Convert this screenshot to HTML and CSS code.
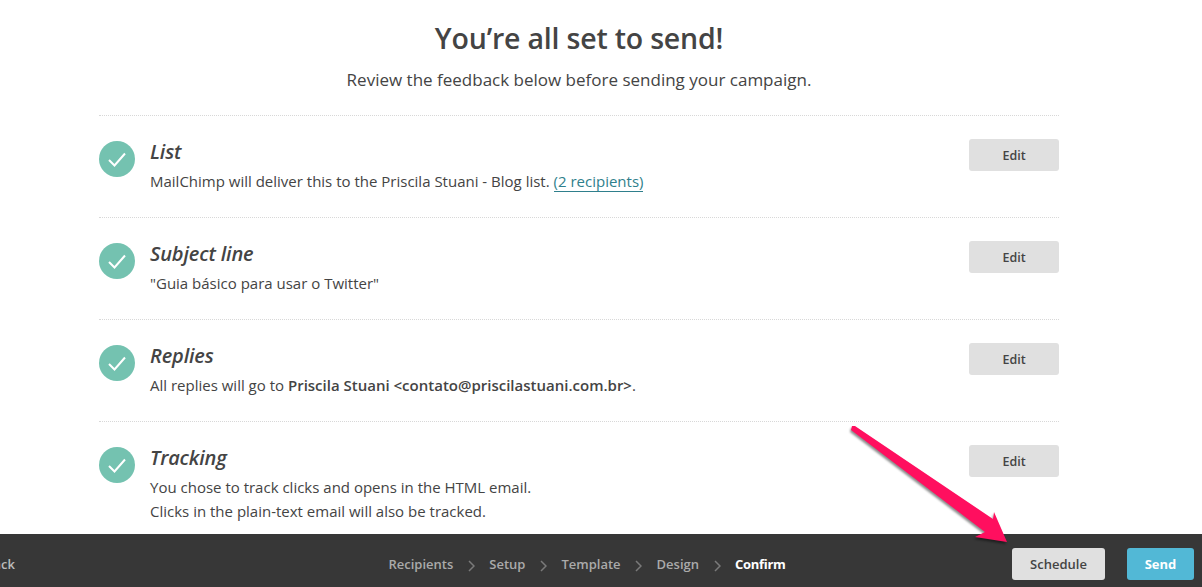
FILE: index.html
```html
<!DOCTYPE html>
<html lang="en">
<head>
<meta charset="utf-8">
<title>Confirm</title>
<link rel="stylesheet" href="styles.css">
</head>
<body>
<main class="page">
  <h1 class="title">You’re all set to send!</h1>
  <p class="lead">Review the feedback below before sending your campaign.</p>
  <ul class="checks">
    <li class="check">
      <svg class="tick" viewBox="0 0 36 36"><circle cx="18" cy="18" r="18" fill="#74c2b0"/><path d="M10 19l5.500 5.500L26 12.500" fill="none" stroke="#fff" stroke-width="2"/></svg>
      <div class="body">
        <h2 class="name">List</h2>
        <p class="desc">MailChimp will deliver this to the Priscila Stuani - Blog list. <a class="link" href="#">(2 recipients)</a></p>
      </div>
      <button class="edit">Edit</button>
    </li>
    <li class="check">
      <svg class="tick" viewBox="0 0 36 36"><circle cx="18" cy="18" r="18" fill="#74c2b0"/><path d="M10 19l5.500 5.500L26 12.500" fill="none" stroke="#fff" stroke-width="2"/></svg>
      <div class="body">
        <h2 class="name">Subject line</h2>
        <p class="desc">"Guia básico para usar o Twitter"</p>
      </div>
      <button class="edit">Edit</button>
    </li>
    <li class="check">
      <svg class="tick" viewBox="0 0 36 36"><circle cx="18" cy="18" r="18" fill="#74c2b0"/><path d="M10 19l5.500 5.500L26 12.500" fill="none" stroke="#fff" stroke-width="2"/></svg>
      <div class="body">
        <h2 class="name">Replies</h2>
        <p class="desc">All replies will go to <strong>Priscila Stuani &lt;contato@priscilastuani.com.br&gt;</strong>.</p>
      </div>
      <button class="edit">Edit</button>
    </li>
    <li class="check">
      <svg class="tick" viewBox="0 0 36 36"><circle cx="18" cy="18" r="18" fill="#74c2b0"/><path d="M10 19l5.500 5.500L26 12.500" fill="none" stroke="#fff" stroke-width="2"/></svg>
      <div class="body">
        <h2 class="name">Tracking</h2>
        <p class="desc">You chose to track clicks and opens in the HTML email.<br>Clicks in the plain-text email will also be tracked.</p>
      </div>
      <button class="edit">Edit</button>
    </li>
  </ul>
</main>
<footer class="bar">
  <a class="back" href="#">Back</a>
  <nav class="steps">
    <span class="step">Recipients</span>
    <svg class="sep" viewBox="0 0 7 12"><path d="M1 1l5 5-5 5" fill="none" stroke="#7a7a7a" stroke-width="1.500"/></svg>
    <span class="step">Setup</span>
    <svg class="sep" viewBox="0 0 7 12"><path d="M1 1l5 5-5 5" fill="none" stroke="#7a7a7a" stroke-width="1.500"/></svg>
    <span class="step">Template</span>
    <svg class="sep" viewBox="0 0 7 12"><path d="M1 1l5 5-5 5" fill="none" stroke="#7a7a7a" stroke-width="1.500"/></svg>
    <span class="step">Design</span>
    <svg class="sep" viewBox="0 0 7 12"><path d="M1 1l5 5-5 5" fill="none" stroke="#7a7a7a" stroke-width="1.500"/></svg>
    <span class="step current">Confirm</span>
  </nav>
  <div class="actions">
    <button class="btn schedule">Schedule</button>
    <button class="btn send">Send</button>
  </div>
</footer>
<svg class="arrow" viewBox="0 0 1202 587"><polygon points="852,426 855,426 993,519 994,512 1007,542 975,537 985,532 851,430" fill="#ff0f5f"/></svg>
</body>
</html>
```
FILE: styles.css
```css
* { box-sizing: border-box; }
html, body { margin: 0; height: 100%; overflow: hidden; }
body {
  position: relative;
  background: #fff;
  color: #444;
  font-family: "Open Sans", sans-serif;
  display: flex;
  flex-direction: column;
}
.page {
  flex: 1;
  min-height: 0;
  overflow: hidden;
  width: 960px;
  margin-left: 99px;
  padding-top: 17px;
}
.title {
  margin: 0;
  height: 43px;
  font-size: 28.500px;
  line-height: 43px;
  font-weight: 600;
  text-align: center;
  letter-spacing: -0.2px;
}
.lead {
  margin: 0;
  padding-top: 9px;
  height: 55px;
  font-size: 17px;
  line-height: 22px;
  text-align: center;
}
.checks { list-style: none; margin: 0; padding: 0; }
.check {
  display: flex;
  align-items: flex-start;
  height: 102px;
  padding-top: 23px;
  border-top: 1px dotted #d8d8d8;
}
.tick { width: 36px; height: 36px; margin-top: 2px; flex: none; }
.body { flex: 1; margin-left: 15px; margin-top: -2px; }
.name {
  margin: 0;
  font-size: 20px;
  line-height: 30px;
  font-weight: 600;
  font-style: italic;
  letter-spacing: -0.15px;
}
.desc { margin: 2px 0 0; font-size: 15px; line-height: 24px; }
.desc strong { font-weight: 600; }
.link { color: #2f7f8c; text-decoration: none; border-bottom: 1px solid #2f7f8c; }
.edit {
  width: 90px;
  height: 32px;
  border: 0;
  border-radius: 3px;
  background: #e0e0e0;
  color: #444;
  font: 600 12.500px "Open Sans", sans-serif;
}
.bar {
  flex: none;
  height: 53px;
  background: #373737;
  display: flex;
  align-items: center;
  position: relative;
  font-size: 13px;
  font-weight: 600;
}
.back { margin-left: -15px; margin-top: 6px; width: 60px; color: #bbb; text-decoration: none; }
.steps {
  position: absolute;
  left: 388.500px;
  top: 21px;
  display: flex;
  align-items: center;
  gap: 14.500px;
  height: 18px;
}
.step { color: #aaa; line-height: 18px; }
.current { color: #fff; font-weight: 700; letter-spacing: -0.3px; }
.sep { width: 7px; height: 12px; margin-top: 3px; }
.actions { margin-left: auto; margin-right: 8px; margin-top: 3px; display: flex; gap: 22px; padding-top: 3px; }
.btn {
  height: 32px;
  border: 0;
  border-radius: 3px;
  font: 600 13px "Open Sans", sans-serif;
}
.schedule { width: 93px; background: #e0e0e0; color: #444; }
.send { width: 67px; background: #52b8d6; color: #fff; font-weight: 700; }
.arrow {
  position: absolute;
  left: 0;
  top: 0;
  width: 1202px;
  height: 587px;
  pointer-events: none;
  filter: drop-shadow(-1px 2px 1px rgba(0, 0, 0, 0.45));
}
```
